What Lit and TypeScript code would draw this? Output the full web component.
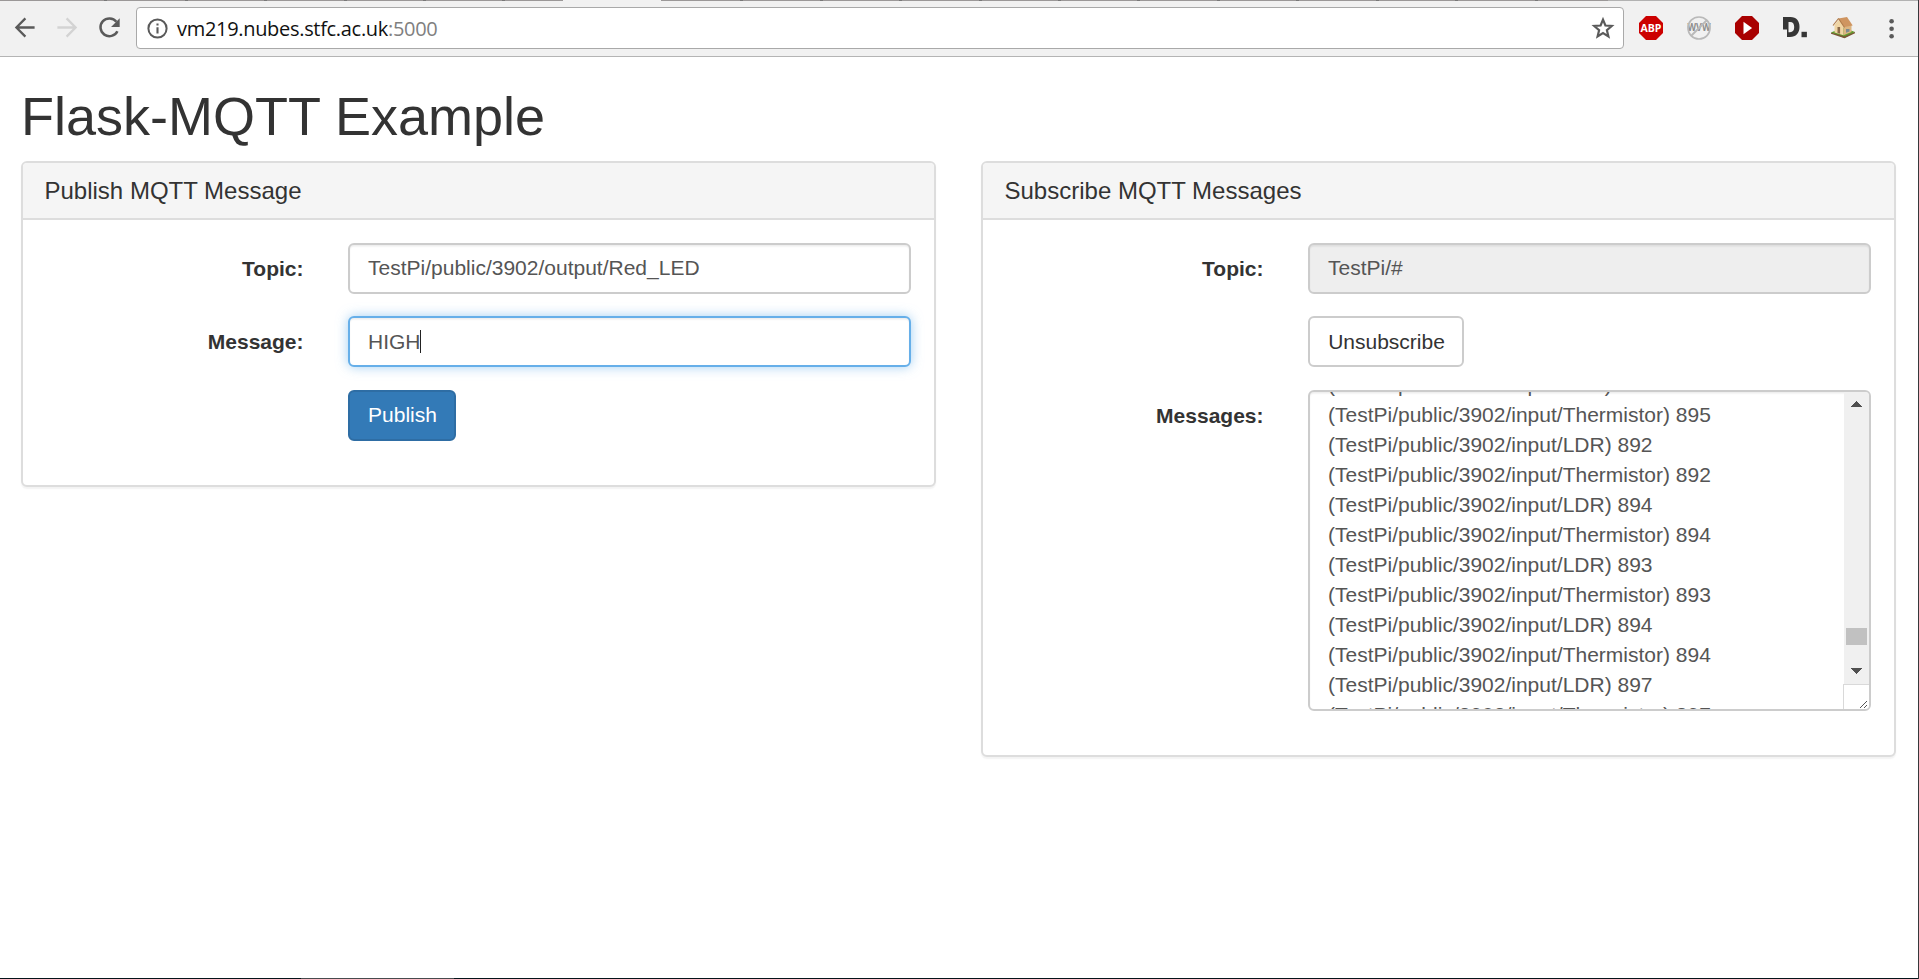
import { LitElement, html, css, svg } from "lit";
import { customElement, property } from "lit/decorators.js";

const TAB_TICKS = [105, 186, 265, 345, 424, 503, 741, 821, 900, 980, 1059, 1138, 1218, 1297, 1377, 1456, 1536];

@customElement("browser-bar")
class BrowserBar extends LitElement {
  static styles = css`
    :host { display: block; height: 57px; }
    .bar { box-sizing: border-box; height: 57px; background: #f1f1f1; border-bottom: 1px solid #b4b4b4; display: flex; flex-direction: column; }
    .tabs { display: block; width: 1918px; height: 1px; flex: none; }
    .row { display: flex; align-items: flex-start; padding-top: 6px; }
    .nav { display: block; width: 136px; height: 42px; flex: none; }
    .omni { box-sizing: border-box; width: 1488px; height: 42px; border: 1px solid #a9a9a9; border-radius: 4px; background: #fff; display: flex; align-items: center; padding-left: 10px; }
    .omni svg { flex: none; display: block; }
    .url { flex: 1; padding: 1px 0 0 9px; font: 20px/28px "Open Sans", "Noto Sans", sans-serif; letter-spacing: -0.31px; color: #111; white-space: nowrap; }
    .port { color: #808080; }
    .star { margin-right: 8px; }
    .ext { display: block; flex: none; width: 294px; height: 42px; }
    .abp { font: bold 11px "Open Sans", sans-serif; fill: #fff; }
    .www { font: bold 10px "Open Sans", sans-serif; fill: #8d8d8d; }
  `;
  render() {
    return html`
      <div class="bar">
        <svg class="tabs" viewBox="0 0 1918 1" shape-rendering="crispEdges">
          <rect width="1608" height="1" fill="#9b9898" />
          <rect x="1608" width="310" height="1" fill="#b2b2b2" />
          ${TAB_TICKS.map((x) => svg`<rect x=${x - 1} width="3" height="1" fill="#777" />`)}
          <rect x="563" width="98" height="1" fill="#f1f1f1" />
        </svg>
        <div class="row">
          <svg class="nav" viewBox="0 7 136 42" fill="none" stroke="#5a5a5a" stroke-width="2.3">
            <path d="M34.6 27.5H17M25.4 18.4l-9 9.1 9 9.1" />
            <path d="M57.4 27.5H75M66.6 18.4l9 9.1-9 9.1" stroke="#d3d3d3" />
            <path d="M116.4 21.8A8.9 8.9 0 1 0 117.4 31.2" stroke-width="2.5" />
            <path d="M119.7 18.3v8.6h-8.6z" fill="#5a5a5a" stroke="none" />
          </svg>
          <div class="omni">
            <svg width="21" height="21" viewBox="0 0 21 21" fill="none" stroke="#5a5a5a">
              <circle cx="10.5" cy="10.5" r="9.1" stroke-width="2" />
              <path d="M10.5 9.2V15.4M10.5 5.4V7.5" stroke-width="2.1" />
            </svg>
            <div class="url">vm219.nubes.stfc.ac.uk<span class="port">:5000</span></div>
            <svg class="star" width="24" height="24" viewBox="0 0 24 24" fill="none" stroke="#5a5a5a" stroke-width="2.2">
              <path d="M12 3.6l2.4 5.9 6.400.500-4.900 4.200 1.500 6.200-5.400-3.300-5.400 3.300 1.500-6.200-4.900-4.200 6.400-.5z" />
            </svg>
          </div>
          <svg class="ext" viewBox="1624 7 294 42">
            <path d="M1646 16h10l7 7v10l-7 7h-10l-7-7V23z" fill="#cc0000" />
            <text class="abp" x="1651" y="32" text-anchor="middle" textLength="21" lengthAdjust="spacingAndGlyphs">ABP</text>
            <text class="www" x="1699" y="31" text-anchor="middle" textLength="23" lengthAdjust="spacingAndGlyphs">WVW</text>
            <circle cx="1699" cy="28" r="11" fill="none" stroke="#b9b9b9" stroke-width="1.7" />
            <path d="M1691 36l16-16" stroke="#b9b9b9" stroke-width="1.9" />
            <path d="M1742 16h10l7 7v10l-7 7h-10l-7-7V23z" fill="#a90000" />
            <path d="M1743.5 21.8v12.4l8.6-6.2z" fill="#fff" />
            <path d="M1783 17h7.500c6 0 9 4 9 10s-3.500 10-9.500 10h-3V29.500h-4z M1788.500 22v10.300h1.500c3 0 4.200-2 4.200-5.200s-1.200-5.100-4.200-5.100z" fill="#363636" fill-rule="evenodd" />
            <path d="M1801.500 31.800h5.400v5.400h-5.400z" fill="#363636" />
            <path d="M1831 32.500l12-5 12 4.500-10.500 6z" fill="#5f9e2c" />
            <path d="M1831 32.500l13.500 3.800L1855 32v1.300l-10.500 5L1831 33.800z" fill="#795735" />
            <path d="M1834.500 25l4-5 5 4.500v10.800l-9-2.800z" fill="#f0d5a4" />
            <path d="M1843.500 24.500l8 .5v7l-8 3.300z" fill="#dcb581" />
            <path d="M1838.500 18.500l8.500-1.500 5.700 8.500-8.200 1.500-6-8z" fill="#cf9560" />
            <path d="M1838.500 18.500l-5.500 7M1838.500 18.500l6 9" stroke="#b07a48" stroke-width="1.100" />
            <path d="M1837.500 27h2.600v6.800l-2.600-.8z" fill="#8c6a48" />
            <path d="M1846 29h3.500v2.500l-3.500 1.200z" fill="#7d8a90" />
            <g fill="#5a5a5a"><circle cx="1891.600" cy="21.200" r="2.300" /><circle cx="1891.600" cy="28.700" r="2.300" /><circle cx="1891.600" cy="36.200" r="2.300" /></g>
          </svg>
        </div>
      </div>`;
  }
}

@customElement("form-panel")
class FormPanel extends LitElement {
  @property() heading = "";
  static styles = css`
    :host { display: block; width: 915px; }
    .panel { box-sizing: border-box; border: 2px solid #ddd; border-radius: 6px; background: #fff; box-shadow: 0 1.5px 1.5px rgba(0,0,0,.05); overflow: hidden; }
    .head { box-sizing: border-box; height: 57px; padding: 15px 21.5px; background: #f5f5f5; border-bottom: 2px solid #ddd; }
    h3 { margin: 0; font-size: 24px; font-weight: normal; line-height: 26px; }
    .body { padding: 23px 23px 44px; display: flex; flex-direction: column; }
  `;
  render() {
    return html`<div class="panel">
      <div class="head"><h3>${this.heading}</h3></div>
      <div class="body"><slot></slot></div>
    </div>`;
  }
}

const LOG: [string, number][] = [
  ["LDR", 895], ["Thermistor", 895], ["LDR", 892], ["Thermistor", 892], ["LDR", 894], ["Thermistor", 894],
  ["LDR", 893], ["Thermistor", 893], ["LDR", 894], ["Thermistor", 894], ["LDR", 897], ["Thermistor", 897],
];

@customElement("app-root")
class AppRoot extends LitElement {
  static styles = css`
    :host { display: flex; flex-direction: column; box-sizing: border-box; height: 979px; width: 1919px; background: #fff; border-right: 1px solid #36383b; overflow: hidden; font: 21px/30px "Liberation Sans", Arial, sans-serif; color: #333; }
    main { flex: 1; padding: 30px 22px 0 21px; }
    h1 { margin: 0 0 15px; font-size: 54px; font-weight: normal; line-height: 59px; }
    .cols { display: flex; gap: 45px; align-items: flex-start; }
    .group { display: flex; align-items: flex-start; }
    .group + .group { margin-top: 22px; }
    .group.late { margin-top: 23px; }
    .label { width: 257.5px; text-align: right; font-weight: bold; padding-top: 11px; margin-right: 44.5px; flex: none; }
    .field { box-sizing: border-box; width: 563px; height: 51px; border: 2px solid #ccc; border-radius: 6px; padding: 7px 18px 9px; color: #555; background: #fff; box-shadow: inset 0 1.5px 1.5px rgba(0,0,0,.075); display: flex; align-items: center; white-space: pre; }
    .focus { padding: 8px 18px; border-color: #66afe9; box-shadow: inset 0 1.5px 1.5px rgba(0,0,0,.075), 0 0 12px rgba(102,175,233,.6); }
    .off { background: #eee; }
    .caret { width: 1px; height: 23px; margin-left: -1px; background: #222; }
    .btn { box-sizing: border-box; height: 51px; border: 2px solid #ccc; border-radius: 6px; background: #fff; color: #333; font: inherit; padding: 0 0 0 1px; width: 156px; text-align: center; }
    .primary { width: 108px; padding-bottom: 2px; background: #337ab7; border-color: #2e6da4; color: #fff; }
    .log { align-items: stretch; height: 321px; padding: 0 0 0 18px; overflow: hidden; }
    .lines { flex: 1; height: 317px; overflow: hidden; }
    .lines div:first-child { margin-top: -22px; }
    .side { display: block; width: 26px; height: 318px; margin-top: -1px; flex: none; }
    .edge { display: block; width: 1918px; height: 1px; flex: none; }
  `;
  render() {
    return html`
      <browser-bar></browser-bar>
      <main>
        <h1>Flask-MQTT Example</h1>
        <div class="cols">
          <form-panel heading="Publish MQTT Message">
            <div class="group"><div class="label">Topic:</div><div class="field">TestPi/public/3902/output/Red_LED</div></div>
            <div class="group"><div class="label">Message:</div><div class="field focus">HIGH<span class="caret"></span></div></div>
            <div class="group late"><div class="label"></div><button class="btn primary">Publish</button></div>
          </form-panel>
          <form-panel heading="Subscribe MQTT Messages">
            <div class="group"><div class="label">Topic:</div><div class="field off">TestPi/#</div></div>
            <div class="group"><div class="label"></div><button class="btn">Unsubscribe</button></div>
            <div class="group late"><div class="label">Messages:</div>
              <div class="field log">
                <div class="lines">${LOG.map(([s, v]) => html`<div>(TestPi/public/3902/input/${s}) ${v}</div>`)}</div>
                <svg class="side" viewBox="0 0 26 318" shape-rendering="crispEdges">
                  <rect x="1" width="25" height="293" fill="#f0f0f0" />
                  <path d="M8 16h11l-5.500-6z" fill="#505050" />
                  <rect x="3" y="237" width="21" height="17" fill="#c1c1c1" />
                  <path d="M8 277h11l-5.500 6z" fill="#505050" />
                  <rect y="293" width="26" height="25" fill="#d9d9d9" />
                  <rect x="1" y="294" width="25" height="24" fill="#fff" />
                  <path d="M17 317l7-7M21 317l3-3" stroke="#555" stroke-width="1" />
                </svg>
              </div>
            </div>
          </form-panel>
        </div>
      </main>
      <svg class="edge" viewBox="0 0 1918 1" shape-rendering="crispEdges">
        <rect width="1918" height="1" fill="#04141a" />
        <rect x="301" width="153" height="1" fill="#474b4e" />
      </svg>`;
  }
}
